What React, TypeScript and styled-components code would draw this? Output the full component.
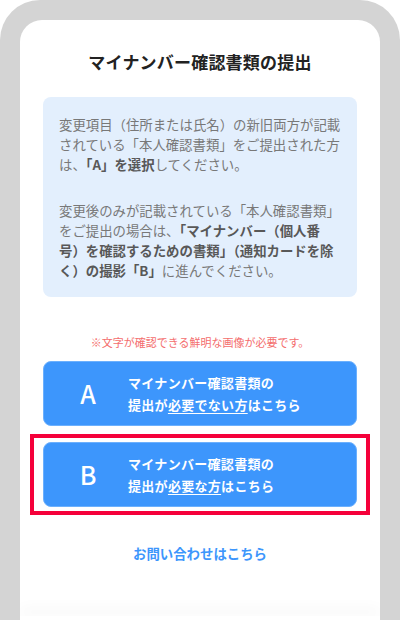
import React from 'react'
import styled, { createGlobalStyle } from 'styled-components'

const GlobalStyle = createGlobalStyle`
	html, body {
		margin: 0;
		padding: 0;
		background: #fff;
	}
	body {
		font-family: "Noto Sans CJK JP", "Noto Sans", sans-serif;
	}
	* {
		box-sizing: border-box;
	}
`

const Bezel = styled.div`
	height: 620px;
	padding: 20px 20px 0;
	background: #d4d4d4;
	border-radius: 40px 40px 0 0;
	overflow: hidden;
`

const Screen = styled.div`
	height: 100%;
	display: flex;
	flex-direction: column;
	background: #fff;
	border-radius: 22px 22px 0 0;
	overflow: hidden;
`

const Content = styled.main`
	flex: 1;
	padding: 30px 23px 0;
	display: flex;
	flex-direction: column;
`

const Footer = styled.footer`
	height: 4px;
	background: #fff;
	box-shadow: 0 -6px 14px rgba(0, 0, 0, 0.07);
`

const Title = styled.h1`
	margin: 0;
	font-size: 17px;
	line-height: 24px;
	font-weight: 700;
	color: #222;
	text-align: center;
	letter-spacing: 0.2px;
`

const InfoBox = styled.section`
	margin-top: 23px;
	padding: 17px 16px;
	background: #e3effd;
	border-radius: 8px;
`

const Para = styled.p`
	margin: 0;
	font-size: 13.4px;
	line-height: 20px;
	color: #787878;
	white-space: nowrap;

	& + & {
		margin-top: 26px;
	}
`

const Strong = styled.b`
	font-weight: 700;
	color: #585858;
`

const Note = styled.p`
	margin: 37px 0 0;
	font-size: 11px;
	line-height: 16px;
	color: #f46d6d;
	text-align: center;
`

const Choice = styled.a`
	display: flex;
	align-items: center;
	height: 65px;
	margin-top: ${({ $gap }: { $gap?: number }) => $gap ?? 0}px;
	background: #3d96fc;
	border: 1px solid #6cb0fd;
	border-radius: 8px;
	color: #fff;
	text-decoration: none;
	cursor: pointer;
`

const Letter = styled.span`
	width: 84px;
	padding-left: 4px;
	text-align: center;
	font-size: 25px;
	font-weight: 500;
	line-height: 1;
`

const Label = styled.span`
	font-size: 13px;
	line-height: 22px;
	font-weight: 700;
	letter-spacing: 0.3px;
`

const Under = styled.span`
	text-decoration: underline;
	text-decoration-thickness: 1px;
	text-underline-offset: 3px;
`

const Highlight = styled.div`
	margin: 8px -13px 0;
	padding: 4px 9px;
	border: 4px solid #f5003a;
`

const Inquiry = styled.a`
	display: block;
	margin-top: 28px;
	font-size: 13.4px;
	line-height: 20px;
	font-weight: 700;
	color: #3d96fc;
	text-align: center;
	text-decoration: none;
`

export default function App() {
	return (
		<>
			<GlobalStyle />
			<Bezel>
				<Screen>
					<Content>
						<Title>マイナンバー確認書類の提出</Title>
						<InfoBox>
							<Para>
								変更項目（住所または氏名）の新旧両方が記載
								<br />
								されている「本人確認書類」をご提出された方
								<br />
								は、<Strong>「A」を選択</Strong>してください。
							</Para>
							<Para>
								変更後のみが記載されている「本人確認書類」
								<br />
								をご提出の場合は、<Strong>「マイナンバー（個人番</Strong>
								<br />
								<Strong>号）を確認するための書類」（通知カードを除</Strong>
								<br />
								<Strong>く）の撮影「B」</Strong>に進んでください。
							</Para>
						</InfoBox>
						<Note>※文字が確認できる鮮明な画像が必要です。</Note>
						<Choice $gap={11}>
							<Letter>A</Letter>
							<Label>
								マイナンバー確認書類の
								<br />
								提出が<Under>必要でない方</Under>はこちら
							</Label>
						</Choice>
						<Highlight>
							<Choice>
								<Letter>B</Letter>
								<Label>
									マイナンバー確認書類の
									<br />
									提出が<Under>必要な方</Under>はこちら
								</Label>
							</Choice>
						</Highlight>
						<Inquiry>お問い合わせはこちら</Inquiry>
					</Content>
					<Footer />
				</Screen>
			</Bezel>
		</>
	)
}
